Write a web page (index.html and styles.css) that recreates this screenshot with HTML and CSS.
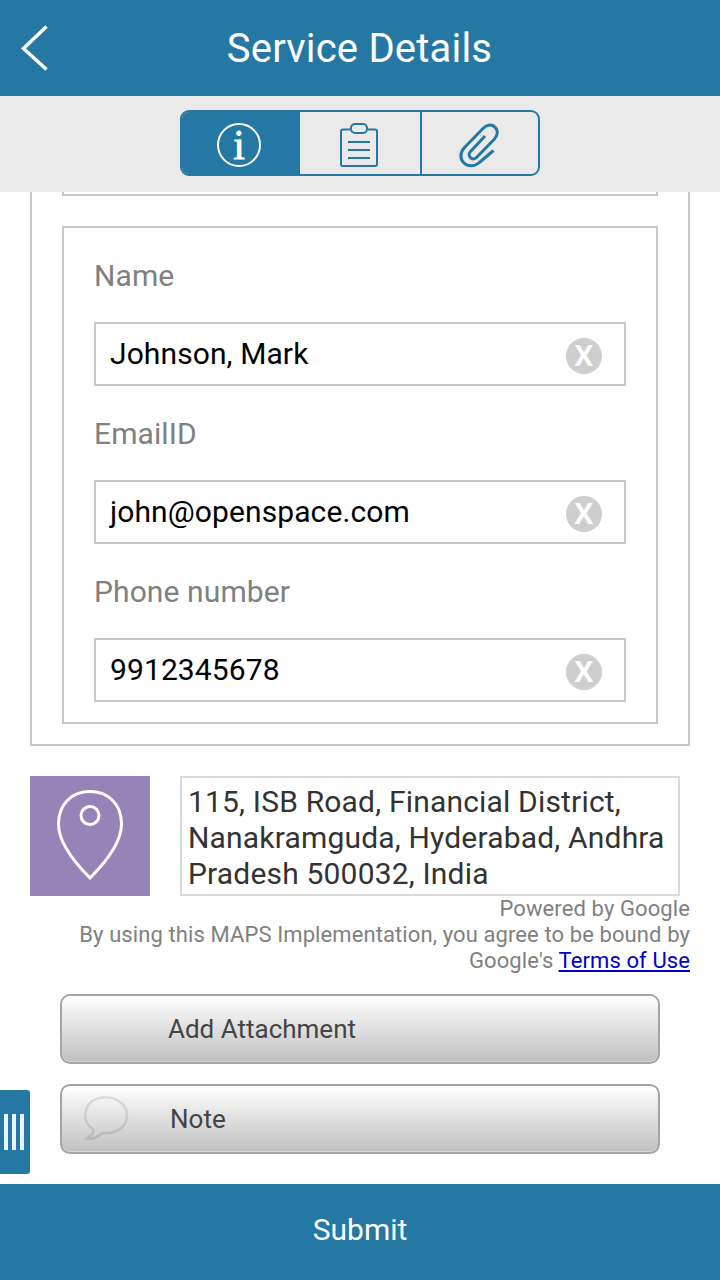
FILE: index.html
```
<!DOCTYPE html>
<html lang="en">
<head>
  <meta charset="UTF-8">
  <title>Service Details</title>
  <link rel="stylesheet" href="styles.css">
</head>
<body>
  <header class="header">
    <a href="#" class="back" aria-label="Back">
      <svg width="30" height="50" viewBox="0 0 30 50">
        <path d="M26.500 3.500 L3.500 25.500 L26.500 46.500" />
      </svg>
    </a>
    <h1 class="title">Service Details</h1>
  </header>

  <!-- Tabs -->
  <nav class="tab-bar">
    <div class="tabs">
      <a href="#" class="tab tab--active" aria-label="Info">
        <svg class="icon" width="48" height="48" viewBox="0 0 48 48">
          <circle cx="24" cy="24" r="21" />
          <text class="info-letter" x="24" y="38">i</text>
        </svg>
      </a>
      <a href="#" class="tab" aria-label="Checklist">
        <svg class="icon" width="48" height="48" viewBox="0 0 48 48">
          <path d="M15 8.500 H8 Q6 8.500 6 10.500 V43 Q6 45 8 45 H40 Q42 45 42 43 V10.500 Q42 8.500 40 8.500 H33" />
          <rect x="16" y="3" width="16" height="9" rx="4" />
          <path d="M13 21 H35 M13 29 H35 M13 37 H35" />
        </svg>
      </a>
      <a href="#" class="tab" aria-label="Attachments">
        <svg class="icon icon--clip" width="48" height="48" viewBox="0 0 48 48">
          <path d="M30 15 L15.500 30.500 C11.500 35 17.500 40.500 21.500 36.500 L39.500 18 C47.500 9 36.500 -1 28.500 7 L9.500 26.500 C-1 38 13.500 51.500 25 41 L38.500 29.500" />
        </svg>
      </a>
    </div>
  </nav>

  <main class="content">
    <div class="form">
      <div class="group group--cut"></div>
      <div class="group">
        <label class="label" for="name">Name</label>
        <div class="field">
          <input type="text" id="name" value="Johnson, Mark">
          <span class="clear">X</span>
        </div>
        <label class="label" for="email">EmailID</label>
        <div class="field">
          <input type="text" id="email" value="john@openspace.com">
          <span class="clear">X</span>
        </div>
        <label class="label" for="phone">Phone number</label>
        <div class="field">
          <input type="text" id="phone" value="9912345678">
          <span class="clear">X</span>
        </div>
      </div>
    </div>

    <!-- Location -->
    <div class="location">
      <a href="#" class="pin" aria-label="Map">
        <svg width="120" height="120" viewBox="0 0 120 120">
          <path d="M60 102 C47 89 28.500 67 28.500 48 C28.500 28 42 15.500 60 15.500 C78 15.500 91.500 28 91.500 48 C91.500 67 73 89 60 102 Z" />
          <circle cx="60" cy="39.500" r="9" />
        </svg>
      </a>
      <div class="address">115, ISB Road, Financial District, Nanakramguda, Hyderabad, Andhra Pradesh 500032, India</div>
    </div>
    <p class="terms">Powered by Google<br>By using this MAPS Implementation, you agree to be bound by<br>Google's <a href="#">Terms of Use</a></p>

    <button class="button button--attach">Add Attachment</button>
    <button class="button">
      <svg class="bubble" width="48" height="48" viewBox="0 0 48 48">
        <path d="M11 34 C-1 27 1 8 16 3.500 C31 -1 45 8 45 21 C45 33 33 39 20.500 38 C16 42 10 44.500 5 43.500 C9 41 12.500 37 11 34 Z" />
      </svg>
      Note
    </button>
  </main>

  <div class="drawer-handle"><i></i><i></i><i></i></div>

  <button class="submit">Submit</button>
</body>
</html>
```

FILE: styles.css
```
* {
  box-sizing: border-box;
}

body {
  margin: 0;
  position: relative;
  display: flex;
  flex-direction: column;
  width: 720px;
  height: 1280px;
  overflow: hidden;
  background: #fff;
  font: 400 30px/36px Roboto, sans-serif;
  letter-spacing: 0.1px;
}

.header {
  display: grid;
  grid-template-columns: 80px 1fr 80px;
  align-items: center;
  height: 96px;
  background: #2578a3;
}

.back {
  height: 50px;
  padding-left: 20px;
}

.back svg {
  display: block;
  fill: none;
  stroke: #fff;
  stroke-width: 3.5px;
}

.title {
  margin: 0 1px 0 0;
  padding-top: 1px;
  color: #fff;
  font-size: 40px;
  font-weight: 400;
  line-height: 48px;
  letter-spacing: 0.2px;
  text-align: center;
}

.tab-bar {
  display: flex;
  justify-content: center;
  height: 96px;
  padding-top: 14px;
  background: #eaeaea;
}

.tabs {
  display: flex;
  width: 360px;
  height: 66px;
  overflow: hidden;
  border: 2px solid #2578a3;
  border-radius: 9px;
}

.tab {
  display: flex;
  justify-content: center;
  align-items: center;
  width: 120px;
  padding: 4px 2px 0 0;
}

.tab + .tab + .tab {
  width: 118px;
  border-left: 2px solid #2578a3;
}

.tab--active {
  width: 118px;
  padding-right: 4px;
  background: #2578a3;
}

.icon {
  fill: none;
  stroke: #2578a3;
  stroke-width: 2px;
}

.icon--clip {
  stroke-width: 3px;
}

.tab--active .icon {
  stroke: #fff;
}

.icon .info-letter {
  fill: #fff;
  stroke-width: 0.8px;
  font: 42px "Liberation Serif", serif;
  letter-spacing: 0;
  text-anchor: middle;
}

.content {
  height: 992px;
  padding: 0 30px;
}

.form {
  padding: 0 30px 20px;
  border: 2px solid #c8c8c8;
  border-top: 0;
}

.group {
  padding: 0 30px 20px;
  border: 2px solid #c8c8c8;
}

.group--cut {
  height: 4px;
  margin-bottom: 30px;
  padding: 0;
  border-top: 0;
}

.label {
  display: block;
  height: 94px;
  padding-top: 30px;
  color: #808080;
}

.field {
  display: flex;
  align-items: center;
  height: 64px;
  padding: 0 22px 0 10px;
  border: 2px solid #c8c8c8;
}

/* indent instead of padding, so the hook of a leading "j" isn't clipped */
.field input {
  flex: 1;
  min-width: 0;
  height: 60px;
  padding: 0 0 2px;
  border: 0;
  outline: 0;
  background: none;
  color: #000;
  font: inherit;
  letter-spacing: inherit;
  text-indent: 4px;
}

.clear {
  width: 36px;
  height: 36px;
  margin-top: 4px;
  border-radius: 50%;
  background: #cecece;
  color: #fff;
  font: 700 28px/34px "Open Sans", sans-serif;
  text-align: center;
}

.location {
  display: flex;
  gap: 30px;
  margin-top: 30px;
}

.pin {
  width: 120px;
  height: 120px;
  background: #9683b7;
}

.pin svg {
  display: block;
  fill: none;
  stroke: #fff;
  stroke-width: 3px;
}

.address {
  width: 500px;
  height: 120px;
  padding: 6px 0 0 6px;
  border: 2px solid #dadada;
  color: #333;
  letter-spacing: 0.18px;
}

.terms {
  margin: 0 0 20px;
  color: #808080;
  font-size: 22px;
  line-height: 26px;
  letter-spacing: 0.1px;
  text-align: right;
}

.terms a {
  color: #0000cc;
}

.button {
  display: flex;
  align-items: center;
  width: 600px;
  height: 70px;
  margin: 0 30px 20px;
  padding: 0 20px;
  border: 2px solid #a5a5a5;
  border-radius: 10px;
  background: linear-gradient(#fff, #c0c0c0);
  box-shadow: inset 0 -1px #d6d6d6;
  color: #444;
  font: 26px/30px Roboto, sans-serif;
}

.button--attach {
  padding-left: 106px;
}

.bubble {
  margin-right: 40px;
  fill: none;
  stroke: rgba(0, 0, 0, 0.1);
  stroke-width: 2.5px;
}

.drawer-handle {
  position: absolute;
  left: 0;
  top: 1090px;
  display: flex;
  gap: 4px;
  width: 30px;
  height: 84px;
  padding: 24px 0 0 4px;
  border-radius: 0 3px 3px 0;
  background: #2578a3;
}

.drawer-handle i {
  width: 4px;
  height: 36px;
  background: #e8f3fa;
}

.submit {
  height: 96px;
  padding: 0 0 4px;
  border: 0;
  background: #2578a3;
  color: #fff;
  font: 30px/36px Roboto, sans-serif;
}
```
